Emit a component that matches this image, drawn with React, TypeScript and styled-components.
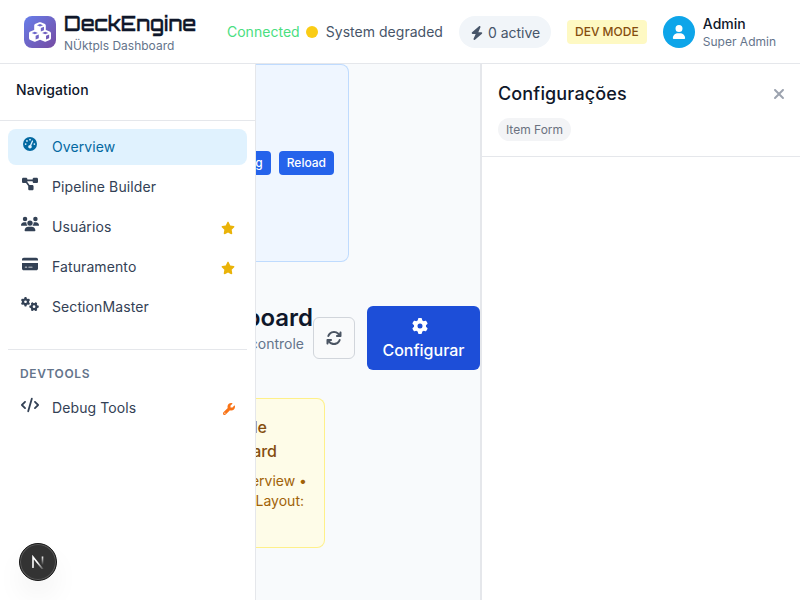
import React from "react";
import styled, { createGlobalStyle } from "styled-components";
import {
  FaArrowsRotate, FaBolt, FaCode, FaCreditCard, FaCubes, FaDiagramProject,
  FaGaugeHigh, FaGear, FaGears, FaStar, FaUser, FaUsers, FaWrench, FaXmark,
} from "react-icons/fa6";

const GlobalStyle = createGlobalStyle`
  * { box-sizing: border-box; }
  body {
    margin: 0;
    overflow: hidden;
    font-family: Inter, "Liberation Sans", sans-serif;
    color: #0f172a;
    background: #f8fafc;
  }
  svg { display: block; flex-shrink: 0; }
  button { font-family: inherit; border: 0; margin: 0; padding: 0; }
`;

const Page = styled.div`
  display: flex;
  flex-direction: column;
  width: 800px;
  height: 600px;
  overflow: hidden;
`;

const Header = styled.header`
  display: flex;
  align-items: center;
  flex: 0 0 64px;
  padding: 0 24px;
  background: #fff;
  border-bottom: 1px solid #e5e7eb;
  white-space: nowrap;
`;

const LogoTile = styled.div`
  display: grid;
  place-items: center;
  width: 32px;
  height: 32px;
  border-radius: 8px;
  color: #fff;
  background: linear-gradient(135deg, #667eea 0%, #764ba2 100%);
`;

const Brand = styled.div`
  width: 163px;
  padding-left: 8px;
`;

const BrandName = styled.div`
  font: 500 20px/28px Orbitron, "DejaVu Sans", sans-serif;
  -webkit-text-stroke: 0.3px #0f172a;
  letter-spacing: 0.1px;
`;

const BrandSub = styled.div`
  font-size: 12px;
  line-height: 16px;
  color: #64748b;
`;

const Connection = styled.div`
  display: flex;
  align-items: center;
  width: 240px;
  padding-left: 8px;
  font-size: 14px;
  line-height: 20px;
  letter-spacing: 0.03px;
  color: #475569;
`;

const Connected = styled.span`
  color: #4ade80;
`;

const StatusDot = styled.i`
  width: 12px;
  height: 12px;
  margin: 0 8px 0 6px;
  border-radius: 50%;
  background: #facc15;
`;

const ActivePill = styled.div`
  display: flex;
  align-items: center;
  gap: 4px;
  width: 92px;
  height: 32px;
  padding: 2px 0 0 11px;
  border-radius: 16px;
  font-size: 14px;
  color: #475569;
  background: #f1f5f9;
`;

const DevBadge = styled.div`
  width: 80px;
  height: 24px;
  margin: 0 16px;
  border-radius: 4px;
  font-size: 12px;
  font-weight: 500;
  line-height: 24px;
  text-align: center;
  color: #854d0e;
  background: #fef9c3;
`;

const Avatar = styled.div`
  display: grid;
  place-items: center;
  width: 32px;
  height: 32px;
  margin-right: 8px;
  border-radius: 50%;
  color: #fff;
  background: #0ea5e9;
`;

const UserName = styled.div`
  font-size: 14px;
  font-weight: 500;
  line-height: 20px;
`;

const Body = styled.div`
  display: flex;
  flex: 1;
  min-height: 0;
`;

const Sidebar = styled.aside`
  display: flex;
  flex-direction: column;
  flex: 0 0 256px;
  background: #fff;
  border-right: 1px solid #e5e7eb;
`;

const SidebarTitle = styled.div`
  flex: 0 0 57px;
  padding: 16px;
  border-bottom: 1px solid #e5e7eb;
  font-size: 14px;
  font-weight: 500;
  line-height: 20px;
  letter-spacing: 0.1px;
`;

const Nav = styled.nav`
  display: flex;
  flex-direction: column;
  gap: 4px;
  padding: 8px;
`;

const NavItem = styled.a<{ $active?: boolean }>`
  display: flex;
  align-items: center;
  height: 36px;
  padding: 0 12px;
  border-radius: 8px;
  font-size: 14px;
  line-height: 20px;
  letter-spacing: 0.1px;
  color: ${(p) => (p.$active ? "#0369a1" : "#334155")};
  background: ${(p) => (p.$active ? "#e0f2fe" : "transparent")};
`;

const NavIcon = styled.span`
  display: flex;
  align-items: center;
  justify-content: center;
  width: 20px;
  height: 18px;
  margin: 0 12px 6px 0;
`;

const NavMark = styled.span<{ $color: string }>`
  margin: 2px 0 0 auto;
  color: ${(p) => p.$color};
`;

const NavDivider = styled.hr`
  width: 239px;
  height: 1px;
  margin: 20px 0 0;
  border: 0;
  background: #e5e7eb;
`;

const NavSection = styled.div`
  padding: 12px 12px 4px;
  font-size: 12px;
  font-weight: 600;
  line-height: 16px;
  letter-spacing: 0.6px;
  color: #64748b;
`;

const FloatingBadge = styled.div`
  display: grid;
  place-items: center;
  width: 38px;
  height: 38px;
  margin: auto 0 19px 19px;
  border: 1px solid #171717;
  border-radius: 50%;
  background: #333;
  box-shadow: inset 0 0 0 1px #5a5a5a, 0 16px 32px -8px rgba(0, 0, 0, 0.14);
`;

const Main = styled.main`
  display: flex;
  flex-direction: column;
  align-items: flex-start;
  width: 224px;
  overflow: hidden;
  background: #f8fafc;
  white-space: nowrap;
`;

const BlueCard = styled.section`
  display: flex;
  align-items: center;
  justify-content: flex-end;
  gap: 8px;
  width: 93px;
  height: 198px;
  padding-right: 14px;
  overflow: hidden;
  border: 1px solid #bfdbfe;
  border-left: 0;
  border-radius: 0 8px 8px 0;
  background: #eff6ff;
`;

const SmallButton = styled.button`
  flex-shrink: 0;
  height: 24px;
  padding: 0 8px;
  border-radius: 4px;
  font-size: 12px;
  font-weight: 500;
  line-height: 24px;
  color: #fff;
  background: #2563eb;
`;

const TitleRow = styled.div`
  display: flex;
  align-items: center;
  width: 224px;
  height: 64px;
  margin-top: 44px;
`;

const Heading = styled.div`
  display: flex;
  flex-direction: column;
  align-items: flex-end;
  width: 57px;
  height: 64px;
`;

const PageTitle = styled.h1`
  margin: -4px 0 0;
  font-size: 24px;
  font-weight: 600;
  line-height: 32px;
`;

const PageSub = styled.p`
  margin: 0;
  padding-right: 9px;
  font-size: 14px;
  line-height: 20px;
  color: #64748b;
`;

const RefreshButton = styled.button`
  display: grid;
  place-items: center;
  width: 42px;
  height: 42px;
  margin-right: 12px;
  border: 1px solid #d1d5db;
  border-radius: 6px;
  color: #4b5563;
  background: #f9fafb;
`;

const ConfigureButton = styled.button`
  display: flex;
  flex-direction: column;
  align-items: center;
  width: 113px;
  height: 64px;
  padding: 12px 0 0;
  border-radius: 6px;
  font-size: 16px;
  font-weight: 500;
  line-height: 24px;
  color: #fff;
  background: #1d4ed8;
  svg { margin: 0 8px 4px 0; }
`;

const YellowCard = styled.section`
  display: flex;
  flex-direction: column;
  align-items: flex-end;
  width: 69px;
  height: 150px;
  margin-top: 28px;
  padding-top: 16px;
  overflow: hidden;
  border: 1px solid #fef08a;
  border-left: 0;
  border-radius: 0 8px 8px 0;
  background: #fefce8;
`;

const NoticeTitle = styled.div<{ $inset: number }>`
  padding-right: ${(p) => p.$inset}px;
  font-size: 16px;
  font-weight: 500;
  line-height: 24px;
  color: #854d0e;
`;

const NoticeText = styled.div<{ $inset: number }>`
  padding-right: ${(p) => p.$inset}px;
  font-size: 14px;
  line-height: 20px;
  color: #a16207;
`;

const NoticeGap = styled.div`
  height: 8px;
  flex-shrink: 0;
`;

const Panel = styled.aside`
  flex: 1;
  background: #fff;
  border-left: 2px solid #e5e7eb;
`;

const PanelHeader = styled.div`
  height: 93px;
  padding: 16px 16px 0;
  border-bottom: 1px solid #e5e7eb;
`;

const PanelTop = styled.div`
  display: flex;
  align-items: center;
  justify-content: space-between;
  height: 28px;
  color: #9ca3af;
  svg { margin-right: -3px; }
`;

const PanelTitle = styled.h2`
  margin: 0;
  font-size: 18px;
  font-weight: 500;
  line-height: 28px;
  letter-spacing: 0.15px;
  color: #0f172a;
`;

const Tag = styled.span`
  display: block;
  width: 73px;
  height: 23px;
  margin-top: 10px;
  border-radius: 12px;
  font-size: 12px;
  line-height: 23px;
  text-align: center;
  color: #6b7280;
  background: #f3f4f6;
`;

const items = [
  { label: "Overview", icon: <FaGaugeHigh size={14} />, active: true },
  { label: "Pipeline Builder", icon: <FaDiagramProject size={16} /> },
  { label: "Usuários", icon: <FaUsers size={18} />, star: true },
  { label: "Faturamento", icon: <FaCreditCard size={16} />, star: true },
  { label: "SectionMaster", icon: <FaGears size={18} /> },
];

function NMark() {
  return (
    <svg width="14" height="14" viewBox="0 0 14 14" fill="none">
      <defs>
        <linearGradient id="nDiagonal" x1="7" y1="7" x2="13" y2="14" gradientUnits="userSpaceOnUse">
          <stop stopColor="#fff" />
          <stop offset="1" stopColor="#fff" stopOpacity="0.1" />
        </linearGradient>
        <linearGradient id="nStem" x1="11" y1="1" x2="11" y2="10" gradientUnits="userSpaceOnUse">
          <stop stopColor="#fff" />
          <stop offset="1" stopColor="#fff" stopOpacity="0" />
        </linearGradient>
      </defs>
      <path d="M2 13V2L12 14.5" stroke="url(#nDiagonal)" strokeWidth="1.6" />
      <path d="M11.5 1.5V10" stroke="url(#nStem)" strokeWidth="1.6" />
    </svg>
  );
}

export default function App() {
  return (
    <>
      <GlobalStyle />
      <Page>
        <Header>
          <LogoTile><FaCubes size={22} /></LogoTile>
          <Brand>
            <BrandName>DeckEngine</BrandName>
            <BrandSub>NÜktpls Dashboard</BrandSub>
          </Brand>
          <Connection>
            <Connected>Connected</Connected>
            <StatusDot />
            System degraded
          </Connection>
          <ActivePill><FaBolt size={14} /> 0 active</ActivePill>
          <DevBadge>DEV MODE</DevBadge>
          <Avatar><FaUser size={14} /></Avatar>
          <div>
            <UserName>Admin</UserName>
            <BrandSub>Super Admin</BrandSub>
          </div>
        </Header>
        <Body>
          <Sidebar>
            <SidebarTitle>Navigation</SidebarTitle>
            <Nav>
              {items.map((item) => (
                <NavItem key={item.label} $active={item.active}>
                  <NavIcon>{item.icon}</NavIcon>
                  {item.label}
                  {item.star && <NavMark $color="#eab308"><FaStar size={14} /></NavMark>}
                </NavItem>
              ))}
              <NavDivider />
              <NavSection>DEVTOOLS</NavSection>
              <NavItem>
                <NavIcon><FaCode size={18} /></NavIcon>
                Debug Tools
                <NavMark $color="#f97316"><FaWrench size={12} /></NavMark>
              </NavItem>
            </Nav>
            <FloatingBadge><NMark /></FloatingBadge>
          </Sidebar>
          <Main>
            <BlueCard>
              <SmallButton>Debug</SmallButton>
              <SmallButton>Reload</SmallButton>
            </BlueCard>
            <TitleRow>
              <Heading>
                <PageTitle>Dashboard</PageTitle>
                <PageSub>controle</PageSub>
              </Heading>
              <RefreshButton><FaArrowsRotate size={16} /></RefreshButton>
              <ConfigureButton><FaGear size={16} />Configurar</ConfigureButton>
            </TitleRow>
            <YellowCard>
              <NoticeTitle $inset={57}>Controle de</NoticeTitle>
              <NoticeTitle $inset={47}>Dashboard</NoticeTitle>
              <NoticeGap />
              <NoticeText $inset={17}>Overview •</NoticeText>
              <NoticeText $inset={20}>Layout:</NoticeText>
            </YellowCard>
          </Main>
          <Panel>
            <PanelHeader>
              <PanelTop>
                <PanelTitle>Configurações</PanelTitle>
                <FaXmark size={16} />
              </PanelTop>
              <Tag>Item Form</Tag>
            </PanelHeader>
          </Panel>
        </Body>
      </Page>
    </>
  );
}
